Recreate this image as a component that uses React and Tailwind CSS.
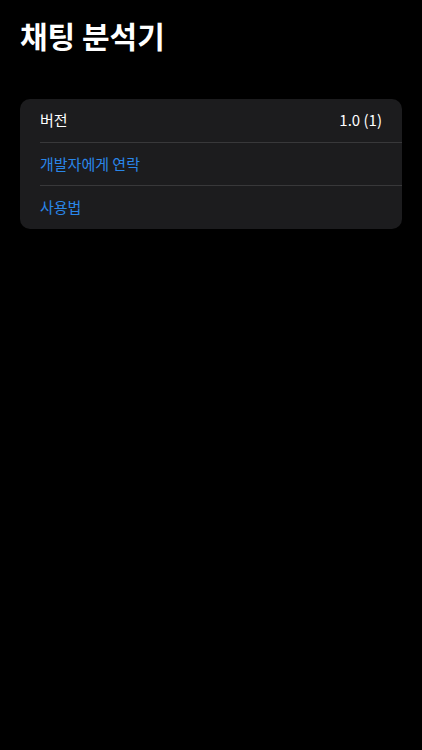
export default function App() {
  const font = { fontFamily: '"Noto Sans CJK KR", "Noto Sans", sans-serif' };
  return (
    <div className="min-h-[750px] w-full bg-black px-5" style={font}>
      <h1 className="pt-[15px] text-[30px] font-bold leading-[40px] text-white">채팅 분석기</h1>
      <div className="mt-[44px] rounded-[10px] bg-[#1c1c1e]">
        <div className="flex h-[43px] items-center justify-between pl-5 pr-5 text-[15px] text-white">
          <span>버전</span>
          <span>1.0 (1)</span>
        </div>
        <div className="ml-5 h-px bg-[#38383a]" />
        <div className="flex h-[42px] items-center pl-5 text-[15px] text-[#2a86e8]">개발자에게 연락</div>
        <div className="ml-5 h-px bg-[#38383a]" />
        <div className="flex h-[43px] items-center pl-5 text-[15px] text-[#2a86e8]">사용법</div>
      </div>
    </div>
  );
}
